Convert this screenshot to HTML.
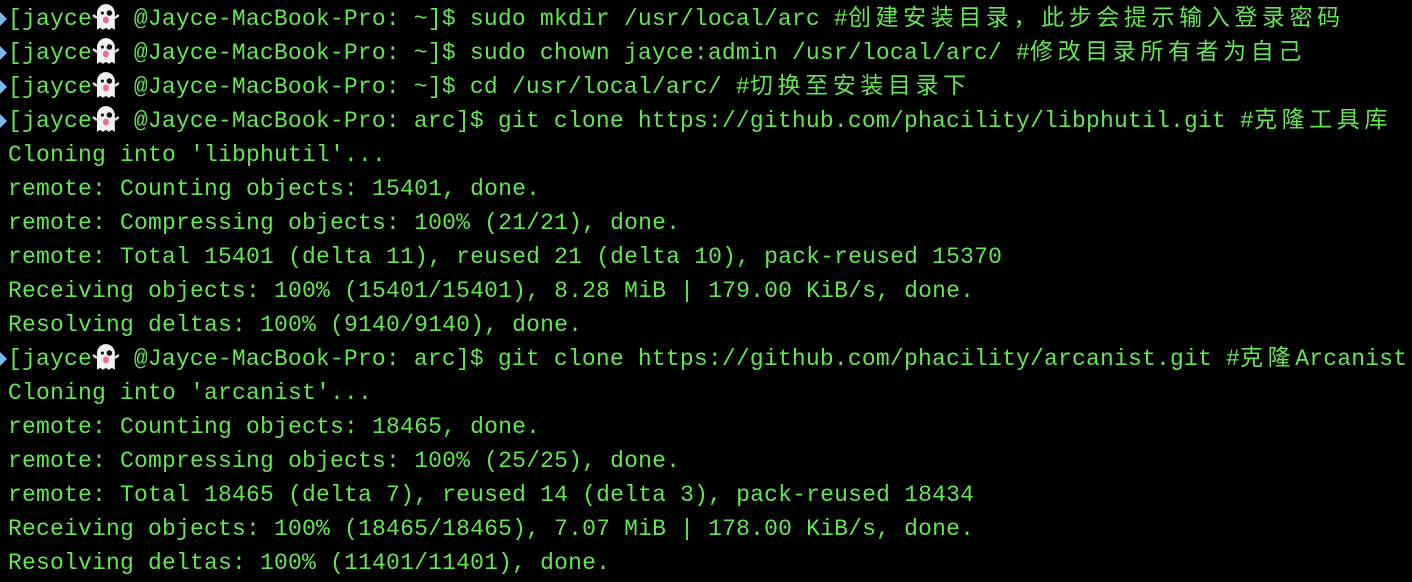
<!DOCTYPE html>
<html><head><meta charset="utf-8"><style>
html,body{margin:0;background:#000;width:1412px;height:582px;overflow:hidden}
pre{margin:0;padding:2px 0 0 8px;font-family:"Liberation Mono","Noto Sans CJK SC",monospace;font-size:23px;letter-spacing:0.2px;line-height:34px;color:#64e653;white-space:pre;position:relative}
.c{letter-spacing:4.6px}
.a{position:absolute;left:0;width:0;height:0;border-top:7px solid transparent;border-bottom:7px solid transparent;border-left:7px solid #7cb7f2;margin-top:10px}
.g{display:inline-block;width:27.8px;height:30px;vertical-align:-7px}
</style></head><body>
<pre><span class="a"></span>[jayce<svg class="g" viewBox="0 0 28 30"><path d="M5 28 V11 a9 9 0 0 1 18 0 V28 l-3-2 -3 2 -3-2 -3 2 -3-2z" fill="#f2f2f2"/><path d="M1 13 l4 3 M27 13 l-4 3" stroke="#ddd" stroke-width="2.5"/><circle cx="10.5" cy="11" r="1.6" fill="#111"/><circle cx="17.5" cy="11" r="2.8" fill="#111"/><ellipse cx="14" cy="18" rx="3" ry="3.5" fill="#e8708a"/></svg> @Jayce-MacBook-Pro: ~]$ sudo mkdir /usr/local/arc #<span class="c">创建安装目录，此步会提示输入登录密码</span>
<span class="a"></span>[jayce<svg class="g" viewBox="0 0 28 30"><path d="M5 28 V11 a9 9 0 0 1 18 0 V28 l-3-2 -3 2 -3-2 -3 2 -3-2z" fill="#f2f2f2"/><path d="M1 13 l4 3 M27 13 l-4 3" stroke="#ddd" stroke-width="2.5"/><circle cx="10.5" cy="11" r="1.6" fill="#111"/><circle cx="17.5" cy="11" r="2.8" fill="#111"/><ellipse cx="14" cy="18" rx="3" ry="3.5" fill="#e8708a"/></svg> @Jayce-MacBook-Pro: ~]$ sudo chown jayce:admin /usr/local/arc/ #<span class="c">修改目录所有者为自己</span>
<span class="a"></span>[jayce<svg class="g" viewBox="0 0 28 30"><path d="M5 28 V11 a9 9 0 0 1 18 0 V28 l-3-2 -3 2 -3-2 -3 2 -3-2z" fill="#f2f2f2"/><path d="M1 13 l4 3 M27 13 l-4 3" stroke="#ddd" stroke-width="2.5"/><circle cx="10.5" cy="11" r="1.6" fill="#111"/><circle cx="17.5" cy="11" r="2.8" fill="#111"/><ellipse cx="14" cy="18" rx="3" ry="3.5" fill="#e8708a"/></svg> @Jayce-MacBook-Pro: ~]$ cd /usr/local/arc/ #<span class="c">切换至安装目录下</span>
<span class="a"></span>[jayce<svg class="g" viewBox="0 0 28 30"><path d="M5 28 V11 a9 9 0 0 1 18 0 V28 l-3-2 -3 2 -3-2 -3 2 -3-2z" fill="#f2f2f2"/><path d="M1 13 l4 3 M27 13 l-4 3" stroke="#ddd" stroke-width="2.5"/><circle cx="10.5" cy="11" r="1.6" fill="#111"/><circle cx="17.5" cy="11" r="2.8" fill="#111"/><ellipse cx="14" cy="18" rx="3" ry="3.5" fill="#e8708a"/></svg> @Jayce-MacBook-Pro: arc]$ git clone https://github.com/phacility/libphutil.git #<span class="c">克隆工具库</span>
Cloning into 'libphutil'...
remote: Counting objects: 15401, done.
remote: Compressing objects: 100% (21/21), done.
remote: Total 15401 (delta 11), reused 21 (delta 10), pack-reused 15370
Receiving objects: 100% (15401/15401), 8.28 MiB | 179.00 KiB/s, done.
Resolving deltas: 100% (9140/9140), done.
<span class="a"></span>[jayce<svg class="g" viewBox="0 0 28 30"><path d="M5 28 V11 a9 9 0 0 1 18 0 V28 l-3-2 -3 2 -3-2 -3 2 -3-2z" fill="#f2f2f2"/><path d="M1 13 l4 3 M27 13 l-4 3" stroke="#ddd" stroke-width="2.5"/><circle cx="10.5" cy="11" r="1.6" fill="#111"/><circle cx="17.5" cy="11" r="2.8" fill="#111"/><ellipse cx="14" cy="18" rx="3" ry="3.5" fill="#e8708a"/></svg> @Jayce-MacBook-Pro: arc]$ git clone https://github.com/phacility/arcanist.git #<span class="c">克隆</span>Arcanist
Cloning into 'arcanist'...
remote: Counting objects: 18465, done.
remote: Compressing objects: 100% (25/25), done.
remote: Total 18465 (delta 7), reused 14 (delta 3), pack-reused 18434
Receiving objects: 100% (18465/18465), 7.07 MiB | 178.00 KiB/s, done.
Resolving deltas: 100% (11401/11401), done.</pre>
</body></html>
